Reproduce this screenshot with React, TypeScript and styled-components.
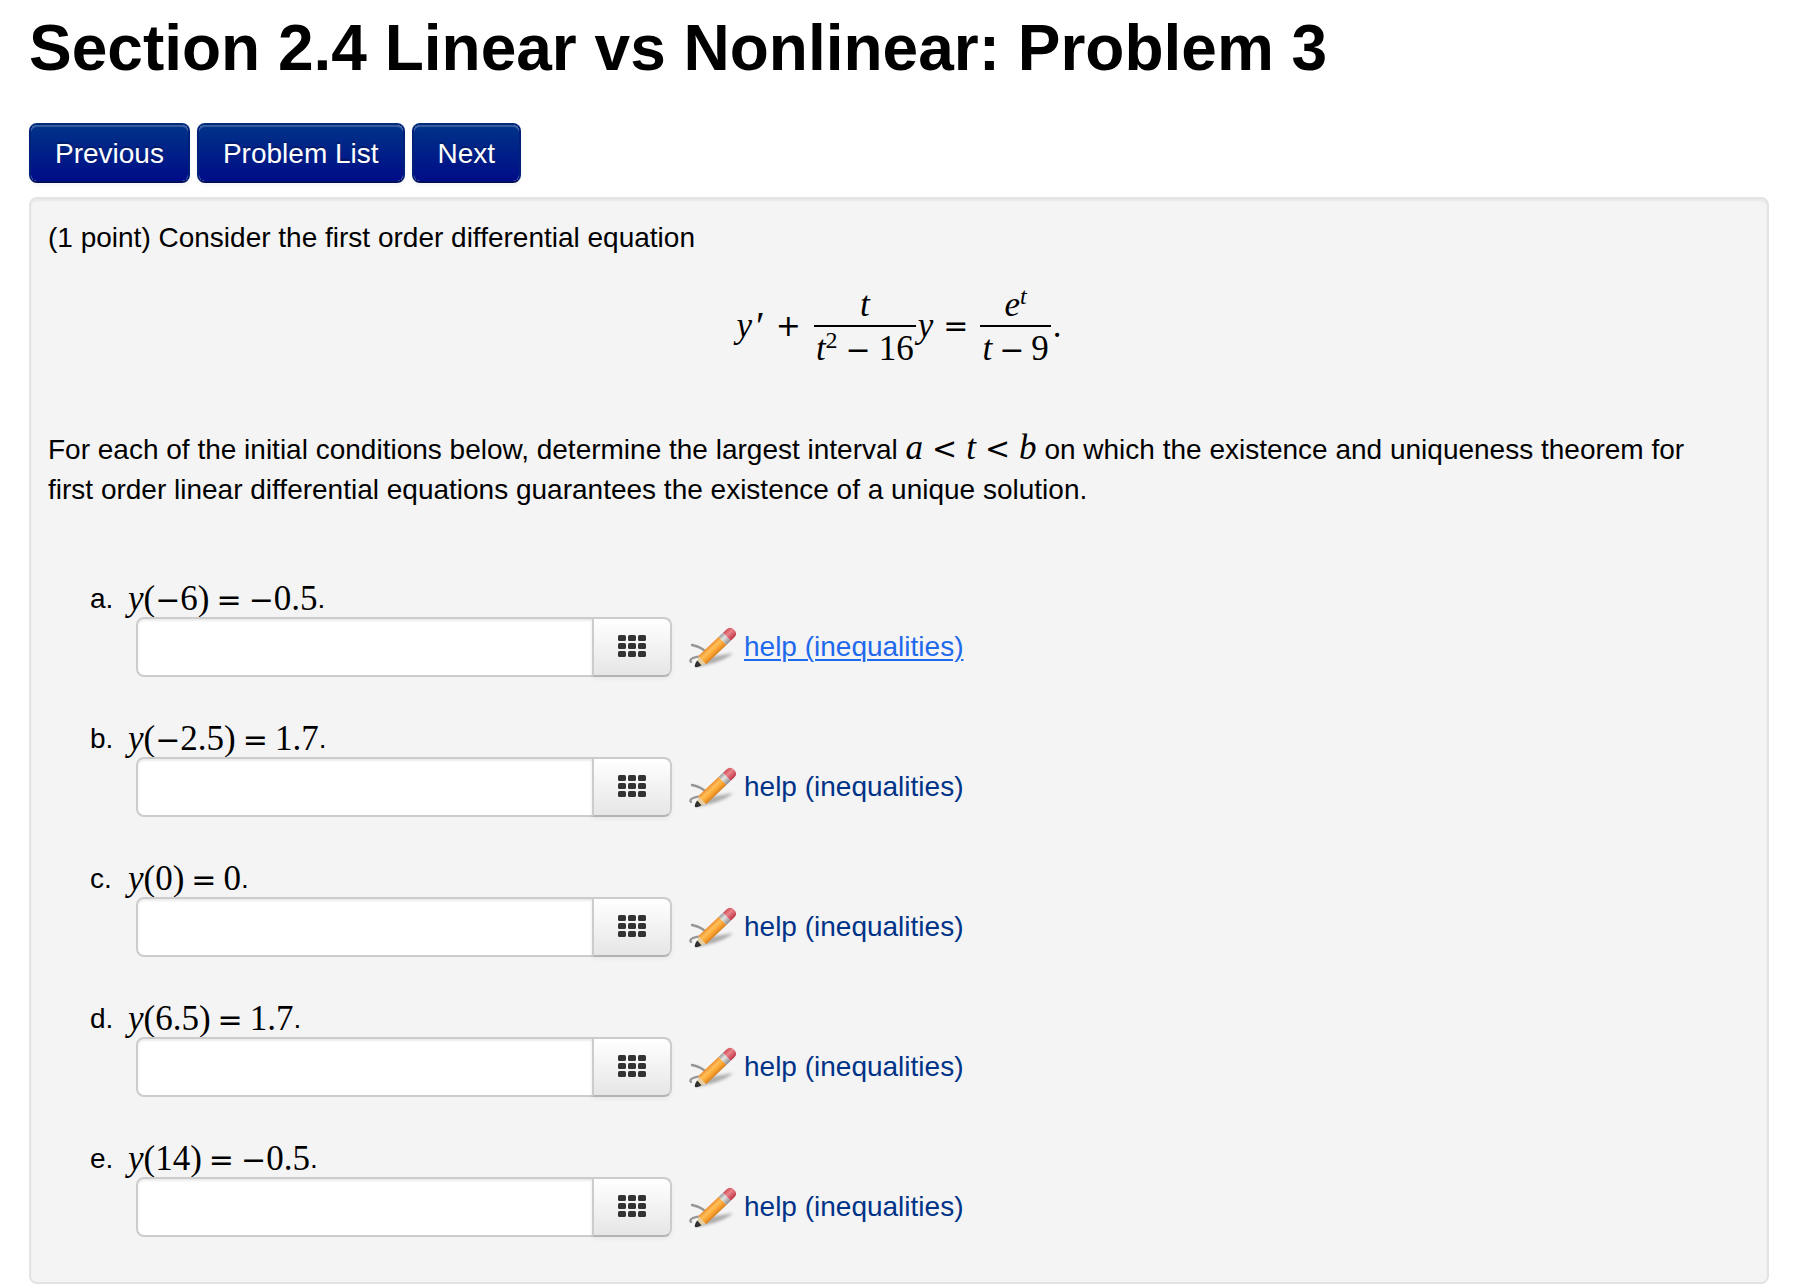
import React from "react";
import styled, { createGlobalStyle } from "styled-components";

const sans = `"Liberation Sans", Arial, sans-serif`;
const serif = `"Liberation Serif", "Times New Roman", serif`;

const GlobalStyle = createGlobalStyle`
  *, *::before, *::after { box-sizing: border-box; }
  body { margin: 0; background: #fff; color: #000; font: 28px/40px ${sans}; }
`;

const Page = styled.main`
  padding: 8px 27px 0 29px;
`;

const Title = styled.h1`
  margin: 0;
  font-size: 64px;
  line-height: 80px;
  font-weight: 700;
`;

const Nav = styled.nav`
  display: flex;
  gap: 7px;
  margin: 35px 0 14px;
`;

const NavButton = styled.button`
  height: 60px;
  padding: 2px 24px 0;
  border: 2px solid #002070;
  border-color: #002a7c #00207a #00105c;
  border-radius: 8px;
  background: linear-gradient(#003388, #000c88) padding-box;
  box-shadow: inset 0 2px 0 rgba(255, 255, 255, 0.2), 0 2px 4px rgba(0, 0, 0, 0.05);
  color: #fff;
  font: 28px/40px ${sans};
  text-shadow: 0 -2px 0 rgba(0, 0, 0, 0.25);
  cursor: pointer;
`;

const Panel = styled.section`
  padding: 19px 17px 45px;
  border: 2px solid #e3e3e3;
  border-radius: 8px;
  background: #f4f4f4;
  box-shadow: inset 0 2px 2px rgba(0, 0, 0, 0.05);
`;

const Text = styled.p`
  margin: 0;
  padding-right: 32px;
`;

const Equation = styled.div`
  display: flex;
  justify-content: center;
  align-items: center;
  height: 88px;
  margin: 24px 0 60px;
  font: 35px/40px ${serif};
`;

const Maths = styled.span<{ $drop?: boolean }>`
  font-family: ${serif};
  font-size: 35px;
  line-height: 0;
  vertical-align: ${(p) => (p.$drop ? "-2px" : "baseline")};
  white-space: nowrap;
`;

const Op = styled.span<{ $gap?: number }>`
  margin: 0 ${(p) => p.$gap ?? 0}px;
  font-family: "DejaVu Sans", sans-serif;
  font-size: 30px;
  line-height: 0;
`;

const Prime = styled.span`
  margin-left: 4px;
  font-size: 40px;
`;

const Sup = styled.sup`
  font-size: 24px;
  line-height: 0;
  vertical-align: 12px;
`;

const Fraction = styled.span`
  display: inline-flex;
  flex-direction: column;
  align-items: center;
  margin: 0 2px;
`;

const Numerator = styled.span`
  height: 42px;
  padding: 2px 2px 0;
`;

const Denominator = styled.span`
  height: 44px;
  padding: 2px 2px 0;
  border-top: 2px solid #000;
`;

const Parts = styled.ol`
  display: flex;
  flex-direction: column;
  gap: 40px;
  margin: 67px 0 0;
  padding: 0 0 0 42px;
  list-style: none;
`;

const Part = styled.li`
  display: grid;
  grid-template-columns: 38px 1fr;
  grid-template-rows: 40px 60px;
`;

const Letter = styled.span`
  padding-top: 2px;
`;

const Condition = styled.label`
  padding-top: 2px;
`;

const AnswerRow = styled.div`
  grid-column: 2;
  display: flex;
  align-items: center;
  padding-left: 8px;
`;

const AnswerInput = styled.input`
  width: 458px;
  height: 60px;
  padding: 8px 12px;
  border: 2px solid #ccc;
  border-radius: 8px 0 0 8px;
  background: #fff;
  box-shadow: inset 0 2px 2px rgba(0, 0, 0, 0.075);
  font: 28px/40px ${sans};
`;

const KeypadButton = styled.button`
  display: flex;
  align-items: center;
  justify-content: center;
  width: 80px;
  height: 60px;
  margin: 0 16px 0 -2px;
  padding: 0 0 2px;
  border: 2px solid #ccc;
  border-bottom-color: #b3b3b3;
  border-radius: 0 8px 8px 0;
  background: linear-gradient(#fff, #e6e6e6) padding-box;
  box-shadow: 0 2px 4px rgba(0, 0, 0, 0.05);
  cursor: pointer;
`;

const HelpLink = styled.a<{ $active?: boolean }>`
  margin-left: 7px;
  color: ${(p) => (p.$active ? "#1f69ec" : "#003388")};
  text-decoration: ${(p) => (p.$active ? "underline" : "none")};
  text-decoration-thickness: 2px;
  text-underline-offset: 3px;
`;

const KeypadIcon = () => (
  <svg width="28" height="22" viewBox="0 0 28 22" fill="#333" aria-hidden="true">
    {[0, 8, 16].map((y) =>
      [0, 10, 20].map((x) => <rect key={`${x}-${y}`} x={x} y={y} width="8" height="6" rx="1.6" />)
    )}
  </svg>
);

const PencilIcon = () => (
  <svg width="49" height="46" viewBox="0 -4 49 46" aria-hidden="true">
    <defs>
      <linearGradient id="pencil-wood" x1="0" y1="0" x2="0" y2="1">
        <stop offset="0" stopColor="#ee9030" />
        <stop offset="0.35" stopColor="#ffbf58" />
        <stop offset="0.65" stopColor="#fba633" />
        <stop offset="1" stopColor="#d98222" />
      </linearGradient>
      <linearGradient id="pencil-metal" x1="0" y1="0" x2="0" y2="1">
        <stop offset="0" stopColor="#9a9a9a" />
        <stop offset="0.4" stopColor="#e4e4e4" />
        <stop offset="1" stopColor="#8c8c8c" />
      </linearGradient>
      <linearGradient id="pencil-rubber" x1="0" y1="0" x2="0" y2="1">
        <stop offset="0" stopColor="#cf4a56" />
        <stop offset="0.4" stopColor="#ea858b" />
        <stop offset="1" stopColor="#bd3444" />
      </linearGradient>
      <filter id="pencil-shade" x="-20%" y="-50%" width="140%" height="200%">
        <feGaussianBlur stdDeviation="1.5" />
      </filter>
      <filter id="pencil-line" x="-20%" y="-20%" width="140%" height="140%">
        <feGaussianBlur stdDeviation="0.7" />
      </filter>
      <filter id="pencil-body" x="-10%" y="-10%" width="120%" height="120%">
        <feGaussianBlur stdDeviation="0.4" />
      </filter>
    </defs>
    <path d="M8 39 L22 29 L45 25 Q36 34 8 39Z" fill="#666" opacity="0.5" filter="url(#pencil-shade)" />
    <path
      d="M4 17 Q14 19 19 25 M18 29 Q10 28 5 30 Q1 32 3 34"
      fill="none"
      stroke="#777"
      strokeWidth="2.4"
      opacity="0.75"
      strokeLinecap="round"
      filter="url(#pencil-line)"
    />
    <g filter="url(#pencil-body)">
      <g transform="translate(7 39) rotate(-43.5)">
        <path d="M1 0 L11 -5.6 V5.6Z" fill="#e6cfa2" />
        <path d="M0 0 Q1 -2.4 6 -3.2 V3.2 Q1 2.4 0 0Z" fill="#333" />
        <rect x="10" y="-5.6" width="28" height="11.2" fill="url(#pencil-wood)" />
        <rect x="38" y="-5.6" width="6" height="11.2" fill="url(#pencil-metal)" />
        <path d="M44 -5.6 H49 Q54 -5.6 54 0 Q54 5.6 49 5.6 H44Z" fill="url(#pencil-rubber)" />
      </g>
    </g>
  </svg>
);

const parts = [
  { id: "a", at: "−6", value: "−0.5", active: true },
  { id: "b", at: "−2.5", value: "1.7" },
  { id: "c", at: "0", value: "0" },
  { id: "d", at: "6.5", value: "1.7" },
  { id: "e", at: "14", value: "−0.5" },
];

const Num = ({ children }: { children: string }) =>
  children.startsWith("−") ? (
    <>
      <Op>−</Op>
      {children.slice(1)}
    </>
  ) : (
    <>{children}</>
  );

export default function App() {
  return (
    <>
      <GlobalStyle />
      <Page>
        <Title>Section 2.4 Linear vs Nonlinear: Problem 3</Title>
        <Nav>
          <NavButton>Previous</NavButton>
          <NavButton>Problem List</NavButton>
          <NavButton>Next</NavButton>
        </Nav>
        <Panel>
          <Text>(1 point) Consider the first order differential equation</Text>
          <Equation>
            <i>y</i>
            <Prime>′</Prime>
            <Op $gap={11}>+</Op>
            <Fraction>
              <Numerator><i>t</i></Numerator>
              <Denominator>
                <i>t</i>
                <Sup>2</Sup>
                <Op $gap={8}>−</Op>16
              </Denominator>
            </Fraction>
            <i>y</i>
            <Op $gap={10}>=</Op>
            <Fraction>
              <Numerator>
                <i>e</i>
                <Sup><i>t</i></Sup>
              </Numerator>
              <Denominator>
                <i>t</i>
                <Op $gap={7}>−</Op>9
              </Denominator>
            </Fraction>
            <span>.</span>
          </Equation>
          <Text>
            For each of the initial conditions below, determine the largest interval{" "}
            <Maths>
              <i>a</i>
              <Op $gap={9}>&lt;</Op>
              <i>t</i>
              <Op $gap={9}>&lt;</Op>
              <i>b</i>
            </Maths>{" "}
            on which the existence and uniqueness theorem for first order linear differential equations
            guarantees the existence of a unique solution.
          </Text>
          <Parts>
            {parts.map((p) => (
              <Part key={p.id}>
                <Letter>{p.id}.</Letter>
                <Condition htmlFor={`answer-${p.id}`}>
                  <Maths $drop>
                    <i>y</i>(<Num>{p.at}</Num>)<Op $gap={7}>=</Op>
                    <Num>{p.value}</Num>
                  </Maths>
                  .
                </Condition>
                <AnswerRow>
                  <AnswerInput id={`answer-${p.id}`} type="text" />
                  <KeypadButton type="button" aria-label="Equation editor">
                    <KeypadIcon />
                  </KeypadButton>
                  <PencilIcon />
                  <HelpLink href="#help" $active={p.active}>
                    help (inequalities)
                  </HelpLink>
                </AnswerRow>
              </Part>
            ))}
          </Parts>
        </Panel>
      </Page>
    </>
  );
}
